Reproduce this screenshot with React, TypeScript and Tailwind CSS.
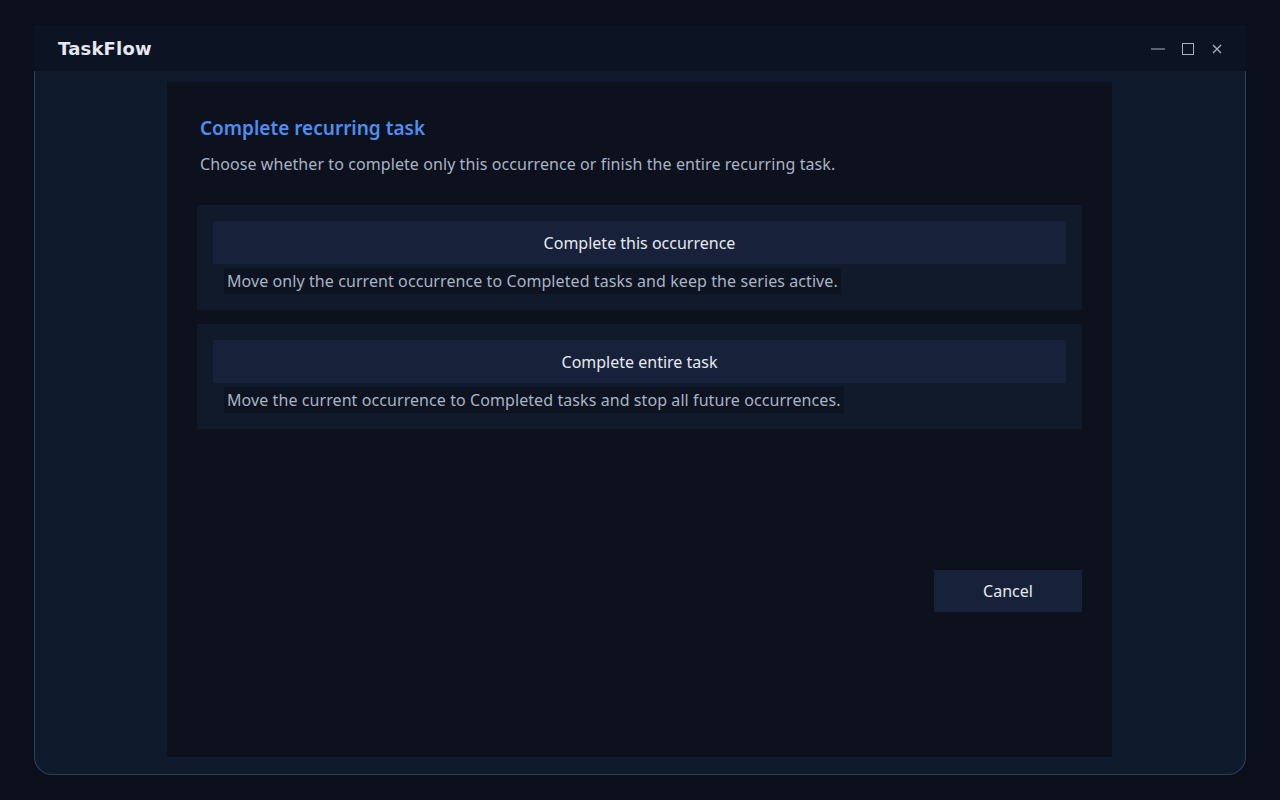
import React from 'react';

const options = [
    {
        title: 'Complete this occurrence',
        description: 'Move only the current occurrence to Completed tasks and keep the series active.',
    },
    {
        title: 'Complete entire task',
        description: 'Move the current occurrence to Completed tasks and stop all future occurrences.',
    },
];

export default function App() {
    return (
        <div className="w-[1280px] h-[800px] bg-[#0a0f1b] pt-[25px] pl-[34px] font-['Noto_Sans',sans-serif]">
            <div className="w-[1212px] flex flex-col">
                {/* title bar */}
                <div className="h-[46px] bg-[#0c1424] flex items-center justify-between pl-6 pr-[23px]">
                    <span className="font-['DejaVu_Sans',sans-serif] font-bold text-[18px] text-[#e4e8f0] tracking-[0.2px]">
                        TaskFlow
                    </span>
                    <div className="flex items-center gap-[16px] text-[#aab3c4]">
                        <svg width="14" height="14" viewBox="0 0 14 14">
                            <line x1="0" y1="8" x2="14" y2="8" stroke="currentColor" strokeWidth="1" />
                        </svg>
                        <svg width="14" height="14" viewBox="0 0 14 14">
                            <rect x="1.5" y="2.5" width="11" height="11" fill="none" stroke="currentColor" strokeWidth="1" />
                        </svg>
                        <svg width="12" height="14" viewBox="0 0 12 14">
                            <path d="M2 4 L10 12 M10 4 L2 12" stroke="currentColor" strokeWidth="1.3" />
                        </svg>
                    </div>
                </div>

                {/* window body */}
                <div className="h-[704px] bg-[#0f1a2d] border border-t-0 border-[#303f5c] rounded-b-[18px] flex pl-[132px] pt-[11px]">
                    <div className="w-[945px] h-[675px] bg-[#0c111d] px-[30px] pt-[32px] flex flex-col">
                        <h2 className="pl-[3px] text-[19px] font-semibold text-[#4f8ef0] leading-[28px]">
                            Complete recurring task
                        </h2>
                        <p className="pl-[3px] mt-[10px] text-[16px] tracking-[0.08px] text-[#a9b3c5] leading-[24px]">
                            Choose whether to complete only this occurrence or finish the entire recurring task.
                        </p>

                        <div className="mt-[29px] flex flex-col gap-[14px]">
                            {options.map((opt) => (
                                <div key={opt.title} className="bg-[#111a2b] p-4">
                                    <button className="w-full h-[43px] bg-[#17223a] text-[16px] text-[#e6e9ef]">
                                        {opt.title}
                                    </button>
                                    <div className="mt-[4px] pl-[11px] flex">
                                        <span className="bg-[#0d1320] px-[3px] h-[26px] leading-[26px] text-[16px] tracking-[0.08px] text-[#a9b3c5]">
                                            {opt.description}
                                        </span>
                                    </div>
                                </div>
                            ))}
                        </div>

                        <div className="mt-[141px] flex justify-end">
                            <button className="w-[148px] h-[42px] bg-[#17223a] text-[16px] text-[#e6e9ef]">
                                Cancel
                            </button>
                        </div>
                    </div>
                </div>
            </div>
        </div>
    );
}
